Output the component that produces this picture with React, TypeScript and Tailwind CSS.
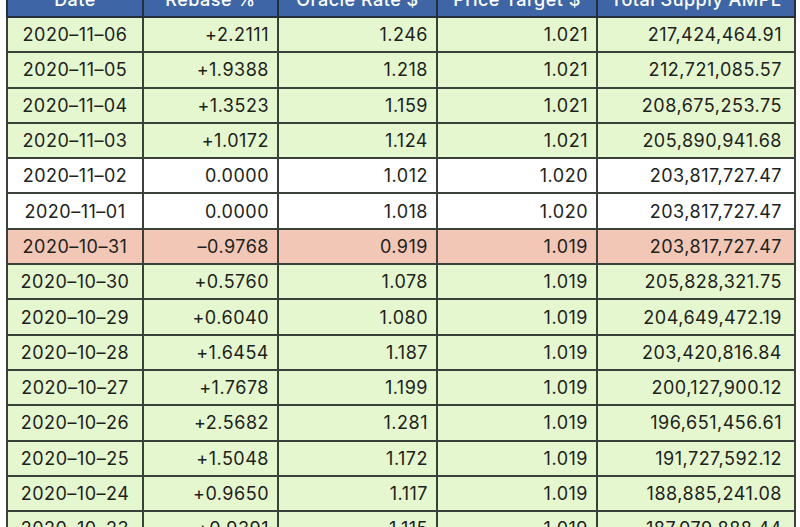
import React from 'react';

type Row = {
  date: string;
  rebase: string;
  oracle: string;
  target: string;
  supply: string;
  tone: 'up' | 'flat' | 'down';
};

const rows: Row[] = [
  { date: '2020–11–06', rebase: '+2.2111', oracle: '1.246', target: '1.021', supply: '217,424,464.91', tone: 'up' },
  { date: '2020–11–05', rebase: '+1.9388', oracle: '1.218', target: '1.021', supply: '212,721,085.57', tone: 'up' },
  { date: '2020–11–04', rebase: '+1.3523', oracle: '1.159', target: '1.021', supply: '208,675,253.75', tone: 'up' },
  { date: '2020–11–03', rebase: '+1.0172', oracle: '1.124', target: '1.021', supply: '205,890,941.68', tone: 'up' },
  { date: '2020–11–02', rebase: '0.0000', oracle: '1.012', target: '1.020', supply: '203,817,727.47', tone: 'flat' },
  { date: '2020–11–01', rebase: '0.0000', oracle: '1.018', target: '1.020', supply: '203,817,727.47', tone: 'flat' },
  { date: '2020–10–31', rebase: '–0.9768', oracle: '0.919', target: '1.019', supply: '203,817,727.47', tone: 'down' },
  { date: '2020–10–30', rebase: '+0.5760', oracle: '1.078', target: '1.019', supply: '205,828,321.75', tone: 'up' },
  { date: '2020–10–29', rebase: '+0.6040', oracle: '1.080', target: '1.019', supply: '204,649,472.19', tone: 'up' },
  { date: '2020–10–28', rebase: '+1.6454', oracle: '1.187', target: '1.019', supply: '203,420,816.84', tone: 'up' },
  { date: '2020–10–27', rebase: '+1.7678', oracle: '1.199', target: '1.019', supply: '200,127,900.12', tone: 'up' },
  { date: '2020–10–26', rebase: '+2.5682', oracle: '1.281', target: '1.019', supply: '196,651,456.61', tone: 'up' },
  { date: '2020–10–25', rebase: '+1.5048', oracle: '1.172', target: '1.019', supply: '191,727,592.12', tone: 'up' },
  { date: '2020–10–24', rebase: '+0.9650', oracle: '1.117', target: '1.019', supply: '188,885,241.08', tone: 'up' },
  { date: '2020–10–23', rebase: '+0.9391', oracle: '1.115', target: '1.019', supply: '187,079,888.44', tone: 'up' },
];

const toneBg = {
  up: 'bg-[#e5f7cf]',
  flat: 'bg-white',
  down: 'bg-[#f2c7b6]',
};

export default function App() {
  return (
    <div className="w-[800px] h-[527px] overflow-hidden bg-white font-['Inter',sans-serif] text-[18px] tracking-[0.5px] text-[#1c221c]">
      <table className="ml-[6px] mt-[-20px] w-[788px] table-fixed border-collapse">
        <colgroup>
          <col className="w-[136px]" />
          <col className="w-[135px]" />
          <col className="w-[159px]" />
          <col className="w-[160px]" />
          <col className="w-[198px]" />
        </colgroup>
        <thead>
          <tr className="bg-[#3e66a6] text-white">
            {['Date', 'Rebase %', 'Oracle Rate $', 'Price Target $', 'Total Supply AMPL'].map((h) => (
              <th key={h} className="h-[36px] border-2 border-[#26303a] px-2 text-center font-medium">
                {h}
              </th>
            ))}
          </tr>
        </thead>
        <tbody>
          {rows.map((r) => (
            <tr key={r.date} className={toneBg[r.tone]}>
              <td className="h-[35.3px] border-2 border-[#3a403a] px-1 text-center">{r.date}</td>
              <td className="border-2 border-[#3a403a] pr-[8px] text-right">{r.rebase}</td>
              <td className="border-2 border-[#3a403a] pr-[8px] text-right">{r.oracle}</td>
              <td className="border-2 border-[#3a403a] pr-[8px] text-right">{r.target}</td>
              <td className="border-2 border-[#3a403a] pr-[12px] text-right">{r.supply}</td>
            </tr>
          ))}
        </tbody>
      </table>
    </div>
  );
}
